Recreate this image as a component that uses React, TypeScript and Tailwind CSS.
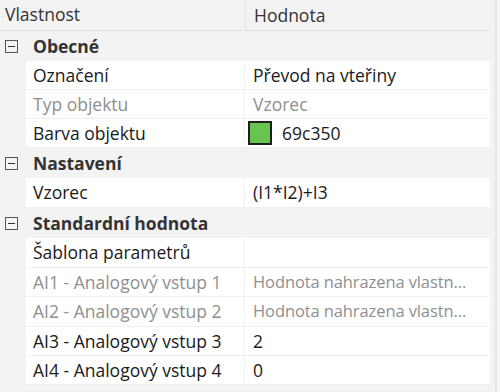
import React from "react";

type Row =
  | { kind: "cat"; label: string; h: number }
  | { kind: "prop"; label: string; value: string; h: number; dim?: boolean; swatch?: string; long?: boolean };

const rows: Row[] = [
  { kind: "cat", label: "Obecné", h: 30 },
  { kind: "prop", label: "Označení", value: "Převod na vteřiny", h: 29 },
  { kind: "prop", label: "Typ objektu", value: "Vzorec", h: 29, dim: true },
  { kind: "prop", label: "Barva objektu", value: "69c350", h: 29, swatch: "#69c350" },
  { kind: "cat", label: "Nastavení", h: 30 },
  { kind: "prop", label: "Vzorec", value: "(I1*I2)+I3", h: 30 },
  { kind: "cat", label: "Standardní hodnota", h: 30 },
  { kind: "prop", label: "Šablona parametrů", value: "", h: 30 },
  { kind: "prop", label: "AI1 - Analogový vstup 1", value: "Hodnota nahrazena vlastn...", h: 29, dim: true, long: true },
  { kind: "prop", label: "AI2 - Analogový vstup 2", value: "Hodnota nahrazena vlastn...", h: 30, dim: true, long: true },
  { kind: "prop", label: "AI3 - Analogový vstup 3", value: "2", h: 29 },
  { kind: "prop", label: "AI4 - Analogový vstup 4", value: "0", h: 29 },
];

function Minus() {
  return (
    <div className="w-[13px] h-[13px] border border-[#555] flex items-center justify-center bg-[#f3f3f3]">
      <div className="w-[7px] h-[1px] bg-[#333]" />
    </div>
  );
}

export default function App() {
  return (
    <div
      className="w-[500px] h-[392px] bg-[#f3f3f3] overflow-hidden flex text-[17.5px] text-[#1a1a1a]"
      style={{ fontFamily: '"Open Sans", "Noto Sans", sans-serif' }}
    >
      <div className="w-[495px] flex flex-col">
        <div className="h-[31px] flex border-b border-[#dcdcdc] w-[490px]">
          <div className="w-[246px] flex items-center pl-[5px] text-[#333] border-r border-[#e2e2e2] mb-[1px]">
            Vlastnost
          </div>
          <div className="flex-1 flex items-center pl-[8px] text-[#333]">Hodnota</div>
        </div>
        {rows.map((r, i) =>
          r.kind === "cat" ? (
            <div key={i} className="flex items-center" style={{ height: r.h }}>
              <div className="w-[26px] flex items-center pl-[5px]">
                <Minus />
              </div>
              <div className="pl-[7px] font-bold text-[#333]">{r.label}</div>
            </div>
          ) : (
            <div key={i} className="flex" style={{ height: r.h }}>
              <div className="w-[26px] shrink-0" />
              <div className="w-[464px] flex border-b border-[#efefef]">
                <div
                  className={`w-[218px] bg-white flex items-center pl-[7px] mr-[1px] whitespace-nowrap overflow-hidden ${
                    r.dim ? "text-[#8f8f8f]" : ""
                  }`}
                >
                  {r.label}
                </div>
                <div
                  className={`flex-1 bg-white flex items-center pl-[8px] whitespace-nowrap overflow-hidden ${
                    r.dim ? "text-[#8f8f8f]" : ""
                  } ${r.long ? "text-[16.5px] tracking-[-0.1px]" : ""}`}
                >
                  {r.swatch ? (
                    <>
                      <div
                        className="w-[24px] h-[24px] border-2 border-[#1e1e1e] -ml-[5px] mr-[10px] shrink-0"
                        style={{ background: r.swatch }}
                      />
                      {r.value}
                    </>
                  ) : (
                    r.value
                  )}
                </div>
              </div>
            </div>
          )
        )}
      </div>
      <div className="w-[2px] bg-[#e6e6e6]" />
      <div className="flex-1 bg-[#f6f6f6]" />
    </div>
  );
}
